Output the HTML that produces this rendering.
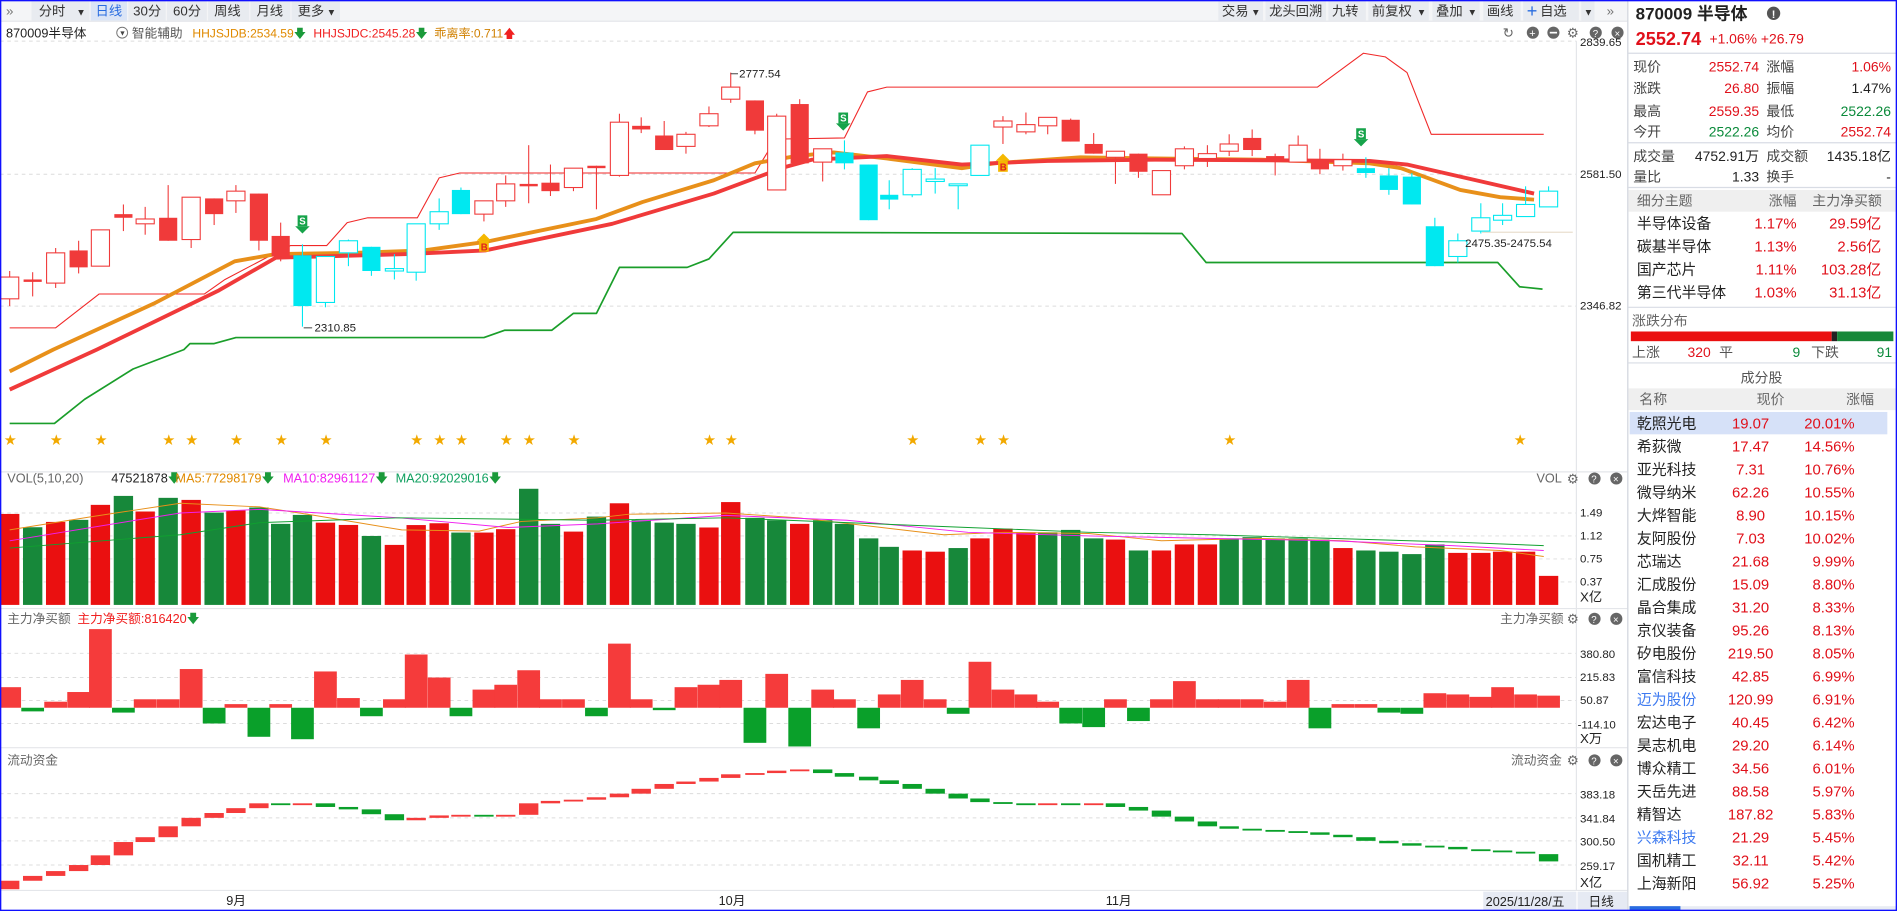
<!DOCTYPE html>
<html><head><meta charset="utf-8"><style>
html,body{margin:0;padding:0;background:#fff;overflow:hidden}
svg{display:block}
text{font-family:"Liberation Sans","Noto Sans CJK SC",sans-serif}
</style></head><body>
<svg id="s" width="1897" height="911" viewBox="0 0 1568 753" preserveAspectRatio="none" xmlns="http://www.w3.org/2000/svg">
<rect x="0" y="0" width="1568" height="753" fill="#fff"/>
<rect x="0" y="0" width="1345" height="17" fill="#f4f5f7"/>
<g fill="#e8ebf0">
<rect x="26" y="1" width="48" height="16"/><rect x="106" y="1" width="31" height="16"/><rect x="138" y="1" width="33" height="16"/>
<rect x="172" y="1" width="34" height="16"/><rect x="207" y="1" width="33" height="16"/><rect x="241" y="1" width="40" height="16"/>
<rect x="1007" y="1" width="37" height="16"/><rect x="1046" y="1" width="50" height="16"/><rect x="1098" y="1" width="31" height="16"/>
<rect x="1131" y="1" width="50" height="16"/><rect x="1184" y="1" width="39" height="16"/><rect x="1226" y="1" width="31" height="16"/>
<rect x="1259" y="1" width="46" height="16"/><rect x="1307" y="1" width="11" height="16"/>
</g>
<rect x="75" y="1" width="30" height="16" fill="#dbe5f6"/>
<g font-size="11" fill="#333">
<text x="5" y="13" fill="#777">»</text>
<text x="32" y="13">分时</text><text x="63" y="13" font-size="8">▼</text>
<text x="79" y="13" fill="#2a6de0">日线</text>
<text x="110" y="13">30分</text><text x="143" y="13">60分</text><text x="177" y="13">周线</text><text x="212" y="13">月线</text>
<text x="246" y="13">更多</text><text x="270" y="13" font-size="8">▼</text>
<text x="1010" y="13">交易</text><text x="1034" y="13" font-size="8">▼</text>
<text x="1049" y="13">龙头回溯</text><text x="1101" y="13">九转</text>
<text x="1134" y="13">前复权</text><text x="1171" y="13" font-size="8">▼</text>
<text x="1187" y="13">叠加</text><text x="1213" y="13" font-size="8">▼</text>
<text x="1229" y="13">画线</text>
<text x="1262" y="14" fill="#2a6de0" font-size="15">+</text><text x="1273" y="13">自选</text>
<text x="1309" y="13" font-size="8">▼</text>
<text x="1328" y="13" fill="#777">»</text>
</g>
<line x1="0" y1="17.5" x2="1345" y2="17.5" stroke="#e2e4e8"/>
<g font-size="10.5">
<text x="5" y="31" fill="#222">870009半导体</text>
<circle cx="101" cy="27" r="4.5" fill="none" stroke="#777" stroke-width="0.8"/><text x="98.3" y="29.5" font-size="6" fill="#444">▼</text>
<text x="109" y="31" fill="#555">智能辅助</text>
<text x="159" y="31" font-size="10" fill="#e08a00">HHJSJDB:2534.59<tspan fill="#1a9a3a">🡇</tspan></text>
<text x="259" y="31" font-size="10" fill="#f02020">HHJSJDC:2545.28<tspan fill="#1a9a3a">🡇</tspan></text>
<text x="359" y="31" font-size="10" fill="#d08000">乖离率:0.711<tspan fill="#f02020">🡅</tspan></text>
</g>
<g font-size="11" fill="#666">
<text x="1242" y="31">↻</text><circle cx="1267" cy="27" r="5" fill="#666"/><text x="1264" y="30.5" fill="#fff" font-size="9">+</text>
<circle cx="1284" cy="27" r="5" fill="#666"/><rect x="1281" y="26.3" width="6" height="1.4" fill="#fff"/>
<text x="1295" y="31">⚙</text><circle cx="1319" cy="27" r="5" fill="#666"/><text x="1316.5" y="30.5" fill="#fff" font-size="8">?</text>
<circle cx="1337" cy="27" r="5" fill="#666"/><text x="1334.5" y="30.5" fill="#fff" font-size="8">×</text>
</g>
<g stroke="#dcdcdc" stroke-dasharray="3,3" stroke-width="0.8">
<line x1="0" y1="34" x2="1303" y2="34"/><line x1="0" y1="144" x2="1303" y2="144"/><line x1="0" y1="253" x2="1303" y2="253"/>
<line x1="0" y1="424" x2="1303" y2="424"/><line x1="0" y1="443" x2="1303" y2="443"/><line x1="0" y1="462" x2="1303" y2="462"/><line x1="0" y1="481" x2="1303" y2="481"/>
<line x1="0" y1="540" x2="1303" y2="540"/><line x1="0" y1="560" x2="1303" y2="560"/><line x1="0" y1="579" x2="1303" y2="579"/><line x1="0" y1="598" x2="1303" y2="598"/>
<line x1="0" y1="656" x2="1303" y2="656"/><line x1="0" y1="676" x2="1303" y2="676"/><line x1="0" y1="695" x2="1303" y2="695"/><line x1="0" y1="715" x2="1303" y2="715"/>
</g>
<g stroke="#e4e6ea" stroke-width="1">
<line x1="0" y1="390" x2="1345" y2="390"/><line x1="0" y1="503" x2="1345" y2="503"/><line x1="0" y1="618" x2="1345" y2="618"/><line x1="0" y1="736" x2="1345" y2="736"/>
<line x1="1303" y1="34" x2="1303" y2="736"/>
</g>
<line x1="1345.5" y1="0" x2="1345.5" y2="753" stroke="#d0d4dc"/>
<line x1="1225" y1="192" x2="1300" y2="192" stroke="#eadfcf" stroke-width="1"/>
<g id="chart"></g>
<g font-size="9.5" fill="#222">
<text x="1306" y="38">2839.65</text><text x="1306" y="147">2581.50</text><text x="1306" y="256">2346.82</text>
<text x="1306" y="427">1.49</text><text x="1306" y="446">1.12</text><text x="1306" y="465">0.75</text><text x="1306" y="484">0.37</text><text x="1306" y="497" font-size="11">X亿</text>
<text x="1306" y="544">380.80</text><text x="1306" y="563">215.83</text><text x="1306" y="582">50.87</text><text x="1304" y="602">-114.10</text><text x="1306" y="614" font-size="11">X万</text>
<text x="1306" y="660">383.18</text><text x="1306" y="680">341.84</text><text x="1306" y="699">300.50</text><text x="1306" y="719">259.17</text><text x="1306" y="733" font-size="11">X亿</text>
</g>
<g font-size="9.5" fill="#222">
<text x="611" y="64">2777.54</text><text x="260" y="274">2310.85</text><text x="1211" y="204">2475.35-2475.54</text>
</g>
<g stroke="#222" stroke-width="0.7"><line x1="604" y1="61" x2="610" y2="61"/><line x1="251" y1="271" x2="258" y2="271"/></g>
<g font-size="10.5">
<text x="6" y="399" fill="#666">VOL(5,10,20)</text>
<text x="92" y="399" fill="#222">47521878<tspan fill="#1a9a3a">🡇</tspan></text>
<text x="145" y="399" fill="#e08a00">MA5:77298179<tspan fill="#1a9a3a">🡇</tspan></text>
<text x="234" y="399" fill="#f020f0">MA10:82961127<tspan fill="#1a9a3a">🡇</tspan></text>
<text x="327" y="399" fill="#10a060">MA20:92029016<tspan fill="#1a9a3a">🡇</tspan></text>
<text x="1270" y="399" fill="#666">VOL</text>
<text x="6" y="515" fill="#666">主力净买额</text>
<text x="64" y="515" fill="#f02020">主力净买额:816420<tspan fill="#1a9a3a">🡇</tspan></text>
<text x="1240" y="515" fill="#666">主力净买额</text>
<text x="6" y="632" fill="#666">流动资金</text>
<text x="1249" y="632" fill="#666">流动资金</text>
</g>
<g id="icons"></g>
<g font-size="10.5" fill="#222"><text x="187" y="748">9月</text><text x="594" y="748">10月</text><text x="914" y="748">11月</text></g>
<rect x="1226" y="737" width="77" height="16" fill="#e6eaf3"/><text x="1228" y="749" font-size="10.5" fill="#222">2025/11/28/五</text>
<rect x="1304" y="737" width="41" height="16" fill="#e6eaf3"/><text x="1313" y="749" font-size="10.5" fill="#222">日线</text>
<text x="1352" y="16" font-size="14" font-weight="bold" fill="#222">870009 半导体</text>
<circle cx="1466" cy="11" r="5.5" fill="#555"/><text x="1464.5" y="15" font-size="9" fill="#fff" font-weight="bold">!</text>
<text x="1352" y="37" font-size="15" font-weight="bold" fill="#e0101a">2552.74</text>
<text x="1413" y="36" font-size="11.5" fill="#e0101a">+1.06%  +26.79</text>
<g stroke="#d8dce4"><line x1="1346" y1="44" x2="1568" y2="44"/><line x1="1346" y1="118" x2="1568" y2="118"/><line x1="1346" y1="155" x2="1568" y2="155"/><line x1="1346" y1="254" x2="1568" y2="254"/><line x1="1346" y1="300" x2="1568" y2="300"/></g>
<g font-size="11.5" fill="#444">
<text x="1350" y="59">现价</text><text x="1350" y="77">涨跌</text><text x="1350" y="96">最高</text><text x="1350" y="113">今开</text>
<text x="1350" y="133">成交量</text><text x="1350" y="150">量比</text>
<text x="1460" y="59">涨幅</text><text x="1460" y="77">振幅</text><text x="1460" y="96">最低</text><text x="1460" y="113">均价</text>
<text x="1460" y="133">成交额</text><text x="1460" y="150">换手</text>
</g>
<g font-size="11.5" text-anchor="end">
<text x="1454" y="59" fill="#e0101a">2552.74</text><text x="1454" y="77" fill="#e0101a">26.80</text><text x="1454" y="96" fill="#e0101a">2559.35</text><text x="1454" y="113" fill="#0a8a3a">2522.26</text>
<text x="1454" y="133" fill="#222">4752.91万</text><text x="1454" y="150" fill="#222">1.33</text>
<text x="1563" y="59" fill="#e0101a">1.06%</text><text x="1563" y="77" fill="#222">1.47%</text><text x="1563" y="96" fill="#0a8a3a">2522.26</text><text x="1563" y="113" fill="#e0101a">2552.74</text>
<text x="1563" y="133" fill="#222">1435.18亿</text><text x="1563" y="150" fill="#222">-</text>
</g>
<rect x="1346" y="157" width="222" height="18" fill="#efefef"/>
<g font-size="11.5" fill="#666"><text x="1353" y="170">细分主题</text><text x="1462" y="170">涨幅</text><text x="1498" y="170">主力净买额</text></g>
<g font-size="12.3" fill="#222"><text x="1353" y="189">半导体设备</text><text x="1353" y="208">碳基半导体</text><text x="1353" y="227">国产芯片</text><text x="1353" y="246">第三代半导体</text></g>
<g font-size="12.3" fill="#e0101a" text-anchor="end">
<text x="1485" y="189">1.17%</text><text x="1485" y="208">1.13%</text><text x="1485" y="227">1.11%</text><text x="1485" y="246">1.03%</text>
<text x="1555" y="189">29.59亿</text><text x="1555" y="208">2.56亿</text><text x="1555" y="227">103.28亿</text><text x="1555" y="246">31.13亿</text>
</g>
<text x="1349" y="269" font-size="11.5" fill="#666">涨跌分布</text>
<rect x="1348" y="274" width="166" height="8" fill="#ea1010"/><rect x="1514" y="274" width="4.5" height="8" fill="#222"/><rect x="1518.5" y="274" width="46.5" height="8" fill="#17883a"/>
<g font-size="11.5"><text x="1349" y="295" fill="#555">上涨</text><text x="1414" y="295" fill="#e0101a" text-anchor="end">320</text><text x="1421" y="295" fill="#555">平</text><text x="1488" y="295" fill="#0a8a3a" text-anchor="end">9</text><text x="1497" y="295" fill="#555">下跌</text><text x="1564" y="295" fill="#0a8a3a" text-anchor="end">91</text></g>
<text x="1456" y="316" font-size="11.5" fill="#555" text-anchor="middle">成分股</text>
<rect x="1346" y="321" width="222" height="18" fill="#efefef"/>
<g font-size="11.5" fill="#666"><text x="1355" y="334">名称</text><text x="1452" y="334">现价</text><text x="1526" y="334">涨幅</text></g>
<rect x="1347" y="340.5" width="213" height="18.5" fill="#d6e1f8"/>
<g id="stocks" font-size="12.3"></g>
<rect x="1346" y="749" width="222" height="4" fill="#e8ecf3"/><rect x="1347" y="749" width="42" height="4" fill="#2a6de0"/>
<rect x="0.5" y="0.5" width="1567" height="752" fill="none" stroke="#1010ff" stroke-width="1.2"/>
</svg>
<script>
var NS="http://www.w3.org/2000/svg",G=document.getElementById('chart');
function el(t,a,p){var e=document.createElementNS(NS,t);for(var k in a)e.setAttribute(k,a[k]);(p||G).appendChild(e);return e}
function pl(pts,c,w,o){el('polyline',{points:pts.map(function(p){return p.join(',')}).join(' '),fill:'none',stroke:c,'stroke-width':w,'stroke-linejoin':'round','stroke-opacity':o||1})}
pl([[8,271],[46,271],[82,243],[169,243],[186,231],[224,211],[240,203],[270,203],[287,184],[304,180],[345,180],[363,147],[380,143],[624,143],[641,115],[698,114],[717,76],[733,72],[1089,72],[1127,44],[1145,47],[1163,60],[1183,111],[1276,111]],'#f02828',0.9);
pl([[8,350],[45,350],[70,330],[110,305],[152,289],[157,284],[177,284],[195,279],[400,279],[417,273],[456,273],[474,259],[493,259],[512,221],[568,221],[586,214],[606,192],[977,193],[997,217],[1238,217],[1256,237],[1275,239]],'#1a9e2a',1.4);
pl([[8,307],[44,289],[127,251],[194,216],[228,210],[295,209],[350,207],[401,200],[493,181],[531,167],[590,149],[624,135],[658,129],[689,126],[733,131],[795,139],[822,135],[893,130],[955,131],[1043,132],[1132,135],[1158,139],[1207,157],[1240,163],[1268,165]],'#e8901a',3.2);
pl([[8,322],[80,289],[181,240],[228,213],[337,210],[401,207],[506,185],[590,160],[649,138],[671,132],[733,129],[795,136],[866,133],[955,132],[1132,133],[1163,136],[1220,149],[1268,160]],'#f03a3a',3.2);
var C=[[8,229,247,224,253,'R'],[27,231,233,225,245,'F'],[46,209,234,205,238,'R'],[65,207,221,199,226,'F'],[83,190,220,190,220,'R'],[102,177,180,169,191,'F'],[120,181,185,171,194,'R'],[139,180,199,153,199,'F'],[158,163,198,163,205,'R'],[177,164,177,164,186,'F'],[195,158,166,153,176,'R'],[214,160,199,160,207,'F'],[232,195,212,184,216,'F'],[250,211,253,202,270,'C'],[269,212,250,212,254,'H'],[288,199,209,198,220,'H'],[307,204,224,204,228,'C'],[326,222,224,210,231,'H'],[344,185,225,185,232,'H'],[363,175,185,164,190,'H'],[381,157,177,155,177,'C'],[400,166,177,166,183,'R'],[418,152,166,145,171,'R'],[437,152,154,120,168,'F'],[455,151,158,136,162,'F'],[474,139,155,139,158,'R'],[493,137,139,137,173,'F'],[512,101,145,94,146,'R'],[530,104,107,97,110,'F'],[549,112,124,100,124,'F'],[567,111,121,109,127,'R'],[586,94,104,88,105,'R'],[604,72,82,60,85,'R'],[624,83,108,83,111,'F'],[642,96,157,94,157,'R'],[661,86,135,82,135,'F'],[680,123,134,123,150,'R'],[698,126,135,116,140,'C'],[718,136,182,136,182,'C'],[735,161,165,149,173,'C'],[754,140,161,139,163,'H'],[773,148,150,139,160,'H'],[792,152,153,152,173,'H'],[810,120,145,120,145,'H'],[829,100,105,96,119,'R'],[848,103,109,93,111,'R'],[866,97,104,97,111,'R'],[885,99,117,98,117,'F'],[904,119,127,110,127,'F'],[922,125,130,125,152,'R'],[941,127,142,127,147,'F'],[960,141,161,141,161,'R'],[979,123,137,121,140,'R'],[998,127,131,120,138,'R'],[1016,119,125,111,129,'R'],[1035,114,124,107,129,'F'],[1054,129,133,127,145,'F'],[1073,120,134,112,134,'R'],[1091,132,140,123,144,'F'],[1110,132,137,127,141,'R'],[1129,139,143,130,147,'C'],[1148,145,157,139,161,'C'],[1167,146,169,143,169,'C'],[1186,187,220,180,220,'C'],[1205,199,212,193,217,'H'],[1224,180,191,168,193,'H'],[1242,178,182,168,186,'H'],[1261,169,179,154,179,'H'],[1280,158,171,154,171,'H']];
C.forEach(function(c){var red=(c[5]=='R'||c[5]=='F'),col=red?'#f03a3a':'#00e8f0',x=c[0];
el('line',{x1:x,y1:c[3],x2:x,y2:c[4],stroke:col,'stroke-width':0.9});
var h=Math.max(c[2]-c[1],1.5);
if(c[5]=='R'||c[5]=='H')el('rect',{x:x-7.5,y:c[1],width:15,height:h,fill:'#fff',stroke:col,'stroke-width':0.9});
else el('rect',{x:x-7.5,y:c[1],width:15,height:h,fill:col});});
function S(x,y){el('rect',{x:x-4,y:y-8,width:8,height:9,fill:'#16a34a'});el('polygon',{points:(x-6)+','+(y+1)+' '+(x+6)+','+(y+1)+' '+x+','+(y+7),fill:'#16a34a'});var t=el('text',{x:x-2.6,y:y-0.5,'font-size':8,'font-weight':'bold',fill:'#fff'});t.textContent='S';}
function B(x,y){el('polygon',{points:(x-6)+','+(y-2)+' '+(x+6)+','+(y-2)+' '+x+','+(y-8),fill:'#f5b800'});el('rect',{x:x-4,y:y-2,width:8,height:9,fill:'#f5b800'});var t=el('text',{x:x-2.6,y:y+6,'font-size':8,'font-weight':'bold',fill:'#e02020'});t.textContent='B';}
S(250,186);S(697,101);S(1125,114);B(400,201);B(829,135);
[8,46,83,139,158,195,232,269,344,363,381,418,437,474,586,604,754,810,829,1016,1256].forEach(function(x){var t=el('text',{x:x-4.5,y:367,'font-size':10,fill:'#f2a900'});t.textContent='★';});
var VT=[424.8,435.8,431.4,429.7,417.3,409.9,422.8,411.5,413.2,423.7,422,419.5,433,425.6,432,433.9,443,450.4,434,432.5,440.2,440.2,437.4,404,433,439.4,427,416,430,432,433,436,415,428,430,433,430,433,445,452,455,456,453,445,437,440,440,438,445,446,455,455,450,450,445,444,445,445,446,453,455,456,458,450,457,457,456,456,476];
var VC='RGRGRGRGRGRGGGRRGRRRGRRGGRG'+'RGGGRRGGRGGGGRRGRRRGGGRGRRRGGGGGRGGGGRRRRR';
VT.forEach(function(t,i){var x=C[i][0];el('rect',{x:x-8,y:t,width:16,height:500-t,fill:VC[i]=='R'?'#ea1010':'#17883a'});});
pl([[8,438],[76,427],[149,416],[215,419],[260,426],[332,438],[396,439],[431,431],[494,428],[520,425],[600,424],[660,428],[720,435],[780,442],[830,440],[900,441],[960,447],[1040,445],[1110,447],[1170,452],[1240,455],[1276,460]],'#e8901a',0.8);
pl([[8,447],[149,424],[215,421],[330,428],[420,436],[494,433],[600,426],[700,430],[800,440],[900,443],[1000,445],[1100,447],[1200,451],[1276,455]],'#f020f0',0.8);
pl([[8,453],[149,442],[215,432],[330,428],[494,430],[600,428],[700,432],[800,436],[900,440],[1000,442],[1100,445],[1200,448],[1276,451]],'#10a030',0.8);
var NB=['R568','G588','R580','R572','R520','G589','R578','R578','R553','G598','R582','G609','R582','G611','R555','R577','G592','R578','R541','R560','G592','R570','R566','R554','R578','R578','G592','R532','R578','G587','R568','R566','R562','G614','R557','G617','R570','R578','G602','R574','R562','R578','G590','R547','R570','R574','R580','G598','G601','R578','G596','R578','R563','R578','R578','R578','R580','R562','G602','R582','R582','G589','G590','R573','R574','R576','R568','R574','R575'];
NB.forEach(function(v,i){var x=C[i][0],y=+v.slice(1),base=585;if(v[0]=='R')el('rect',{x:x-9.4,y:y,width:18.8,height:base-y,fill:'#f53b3b'});else el('rect',{x:x-9.4,y:base,width:18.8,height:y-base,fill:'#0aa02a'});});
var L=[728,724,720,715,707,696,692,683,676,672,668,664,665,664,667,669,673,678,676,674,673.5,674,673.5,664,662,661,659,656,652,648,646,643,640,639,637,636,639,642,645,648,652,656,660,663,664,664.5,664,664.5,664,667,670,675,679,683,685,686,687,688,690,692,695,697,699,700,702,703,704,705,711];
var prev=735;L.forEach(function(v,i){var x=C[i][0],up=v<=prev,a=Math.min(v,prev),h=Math.max(Math.abs(v-prev),1.5);if(i==68){up=false;a=706;h=6;}
el('rect',{x:x-8,y:a,width:16,height:h,fill:up?'#f53b3b':'#0aa02a'});prev=v;});
var IG=document.getElementById('icons');
[399,515,632].forEach(function(y){[[1300,'⚙'],[1318,'?'],[1336,'×']].forEach(function(p,j){if(j==0){var t=el('text',{x:p[0]-5,y:y+0.5,'font-size':11,fill:'#666'},IG);t.textContent='⚙';}else{el('circle',{cx:p[0],cy:y-3.5,r:5,fill:'#666'},IG);var t=el('text',{x:p[0]-2.7,y:y,'font-size':8,fill:'#fff'},IG);t.textContent=p[1];}});});
var ST=[['乾照光电','19.07','20.01%'],['希荻微','17.47','14.56%'],['亚光科技','7.31','10.76%'],['微导纳米','62.26','10.55%'],['大烨智能','8.90','10.15%'],['友阿股份','7.03','10.02%'],['芯瑞达','21.68','9.99%'],['汇成股份','15.09','8.80%'],['晶合集成','31.20','8.33%'],['京仪装备','95.26','8.13%'],['矽电股份','219.50','8.05%'],['富信科技','42.85','6.99%'],['迈为股份','120.99','6.91%',1],['宏达电子','40.45','6.42%'],['昊志机电','29.20','6.14%'],['博众精工','34.56','6.01%'],['天岳先进','88.58','5.97%'],['精智达','187.82','5.83%'],['兴森科技','21.29','5.45%',1],['国机精工','32.11','5.42%'],['上海新阳','56.92','5.25%']];
var SG=document.getElementById('stocks');
ST.forEach(function(s,i){var y=354+i*19.02;
var t=el('text',{x:1353,y:y,fill:s[3]?'#3d7af0':'#222'},SG);t.textContent=s[0];
t=el('text',{x:1447,y:y,fill:'#e0101a','text-anchor':'middle'},SG);t.textContent=s[1];
t=el('text',{x:1533,y:y,fill:'#e0101a','text-anchor':'end'},SG);t.textContent=s[2];});
</script>
</body></html>
